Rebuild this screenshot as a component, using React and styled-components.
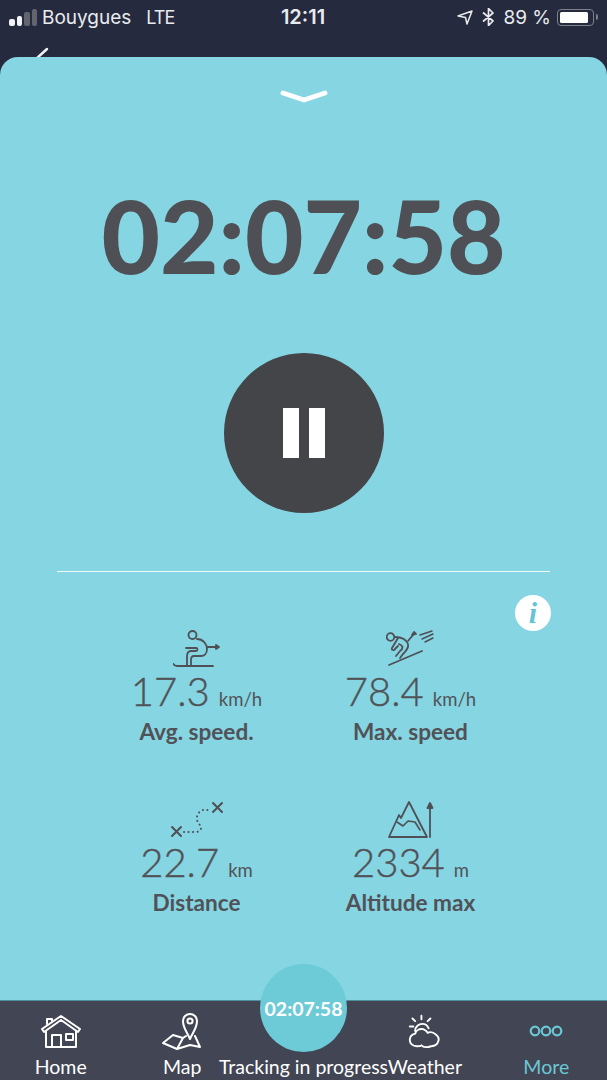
import React from "react";
import styled, { createGlobalStyle } from "styled-components";

const GlobalStyle = createGlobalStyle`
  html, body {
    margin: 0;
    padding: 0;
    background: #252a3e;
  }
  * {
    box-sizing: border-box;
  }
`;

const Screen = styled.div`
  position: relative;
  width: 607px;
  height: 1080px;
  overflow: hidden;
  display: flex;
  flex-direction: column;
  background: #252a3e;
  font-family: Lato, "Open Sans", sans-serif;
`;

const StatusBar = styled.div`
  height: 57px;
  flex: none;
  padding: 0 10px 23px 9px;
  display: grid;
  grid-template-columns: 1fr auto 1fr;
  align-items: center;
  color: #e9eaee;
  font-family: Inter, "Liberation Sans", sans-serif;
  font-size: 19px;
`;

const Carrier = styled.div`
  display: flex;
  align-items: center;
  gap: 5px;
`;

const Signal = styled.div`
  display: flex;
  align-items: flex-end;
  gap: 2px;
  height: 17px;
`;

const SignalBar = styled.span`
  width: 5.5px;
  height: ${(p) => p.$h}px;
  border-radius: 2px;
  background: ${(p) => (p.$on ? "#f2f3f5" : "#62656f")};
`;

const Lte = styled.span`
  margin-left: 10px;
  font-size: 18px;
  letter-spacing: -1px;
`;

const Clock = styled.div`
  font-weight: 600;
  font-size: 20px;
`;

const StatusRight = styled.div`
  display: flex;
  align-items: center;
  justify-content: flex-end;
  gap: 9px;
`;

const Battery = styled.div`
  position: relative;
  width: 37px;
  height: 17px;
  padding: 2px;
  margin-left: -3px;
  margin-right: 3px;
  border: 1.5px solid #7d808b;
  border-radius: 4px;

  &::after {
    content: "";
    position: absolute;
    right: -4.5px;
    top: 4px;
    width: 2px;
    height: 6px;
    border-radius: 0 2px 2px 0;
    background: #7d808b;
  }
`;

const BatteryFill = styled.div`
  height: 100%;
  width: 90%;
  border-radius: 1.5px;
  background: #fff;
`;

const BackChevron = styled.svg`
  position: absolute;
  left: 33px;
  top: 47px;
`;

const Sheet = styled.main`
  position: relative;
  flex: 1;
  min-height: 0;
  padding: 33px 57px 0;
  border-radius: 18px 18px 0 0;
  background: #85d5e2;
  color: #4f5055;
  display: flex;
  flex-direction: column;
  align-items: center;
`;

const Timer = styled.div`
  margin-top: 70px;
  font-size: 101px;
  line-height: 122px;
  font-weight: 900;
  color: #4f5055;
  white-space: nowrap;
`;

const PauseButton = styled.button`
  width: 160px;
  height: 160px;
  margin-top: 57px;
  flex: none;
  padding: 0;
  border: none;
  border-radius: 50%;
  background: #434549;
  display: flex;
  align-items: center;
  justify-content: center;
  gap: 10px;
`;

const PauseBar = styled.span`
  width: 16px;
  height: 50px;
  background: #fff;
`;

const Divider = styled.hr`
  width: 100%;
  height: 1px;
  margin: 58px 0 0;
  border: none;
  background: #f1fafb;
  flex: none;
`;

const InfoBadge = styled.div`
  position: absolute;
  right: 56px;
  top: 538px;
  width: 36px;
  height: 36px;
  border-radius: 50%;
  background: #fff;
  color: #65c5d6;
  display: flex;
  align-items: center;
  justify-content: center;
  font-family: "Liberation Serif", serif;
  font-size: 30px;
  font-weight: 700;
  font-style: italic;
`;

const StatsGrid = styled.div`
  width: 100%;
  margin-top: 57px;
  display: grid;
  grid-template-columns: 214px 214px;
  justify-content: center;
  grid-auto-rows: 171px;
`;

const Stat = styled.div`
  display: flex;
  flex-direction: column;
  align-items: center;
`;

const StatIcon = styled.svg`
  display: block;
  flex: none;
`;

const Value = styled.div`
  margin-top: 2px;
  font-size: 40px;
  line-height: 44px;
  font-weight: 300;
  -webkit-text-stroke: 0.4px #515257;
  color: #515257;
  white-space: nowrap;
`;

const Unit = styled.span`
  margin-left: 9px;
  font-size: 18.5px;
  font-weight: 400;
  -webkit-text-stroke: 0;
`;

const Label = styled.div`
  margin-top: -2px;
  font-size: 22.6px;
  line-height: 26px;
  font-weight: 700;
  color: #515257;
  white-space: nowrap;
`;

const TabBar = styled.nav`
  height: 80px;
  flex: none;
  display: grid;
  grid-template-columns: repeat(5, minmax(0, 1fr));
  border-top: 1px solid #4f8f9b;
  background: #424553;
`;

const Tab = styled.div`
  display: flex;
  flex-direction: column;
  align-items: center;
  justify-content: flex-end;
  color: ${(p) => (p.$active ? "#6bc9d6" : "#fff")};
`;

const TabIcon = styled.div`
  height: 46px;
  display: flex;
  align-items: center;
  justify-content: center;
`;

const TabLabel = styled.span`
  font-size: 19.5px;
  line-height: 26px;
  white-space: nowrap;
`;

const TrackingBubble = styled.div`
  position: absolute;
  left: 260px;
  top: 964px;
  width: 87px;
  height: 88px;
  border-radius: 50%;
  background: #6dcad7;
  color: #fff;
  font-size: 19.5px;
  font-weight: 700;
  line-height: 90px;
  text-align: center;
`;

const SkierIcon = () => (
  <StatIcon width="48" height="38" viewBox="0 0 48 38" fill="none" stroke="#4f5055" strokeWidth="1.8" strokeLinecap="round" strokeLinejoin="round">
    <circle cx="19.5" cy="6" r="4" />
    <path d="M0.5 35C1 36.5 2 37 4 37H40" />
    <path d="M24 10C30 10 34 15 34 20C34 25 31 27 28 27H21C19 27 18 29 18 31V37" />
    <path d="M13 19H23C25 19 25 22 23 22H18C15 22 14 25 14 28V37" />
    <path d="M34 18H44" />
    <path d="M43 16l3 2-3 2z" fill="#4f5055" />
  </StatIcon>
);

const DownhillIcon = () => (
  <StatIcon width="50" height="38" viewBox="0 0 50 38" fill="none" stroke="#4f5055" strokeWidth="1.8" strokeLinecap="round" strokeLinejoin="round">
    <circle cx="4.5" cy="8" r="3.8" />
    <path d="M3 36L36 22" />
    <path d="M9 8C14 8 20 10 22 15C23 19 20 22 17 25L14 29" />
    <path d="M12 9L6 19C5 21 8 22 9 20L12 17" />
    <path d="M13 15C18 17 17 20 14 22L10 27" />
    <path d="M22 12L27 6" />
    <path d="M28 3l2 2-4 1z" fill="#4f5055" />
    <path d="M34 6L46 2M36 10L47 5M39 13L47 9" strokeWidth="1.5" />
  </StatIcon>
);

const RouteIcon = () => (
  <StatIcon width="54" height="38" viewBox="0 0 54 38" fill="none" stroke="#4f5055" strokeLinecap="round">
    <path d="M2 27l9 9M11 27l-9 9M43 3l9 9M52 3l-9 9" strokeWidth="2" />
    <path d="M14 32h12c3 0 5-2 5-4 0-3-3-4-4-8-1-4 2-9 6-10h6" strokeWidth="2" strokeDasharray="0.1 4.4" />
  </StatIcon>
);

const AltitudeIcon = () => (
  <StatIcon width="46" height="38" viewBox="0 0 46 38" fill="none" stroke="#4f5055" strokeWidth="1.8" strokeLinecap="round" strokeLinejoin="round">
    <path d="M1 37L11 15L13 18L21 2L39 37Z" />
    <path d="M9 22L15 26L20 21L27 22L32 30" strokeWidth="1.6" />
    <path d="M42 37V5" />
    <path d="M39.5 8L42 3L44.5 8Z" fill="#4f5055" />
  </StatIcon>
);

const HomeIcon = () => (
  <svg width="40" height="33" viewBox="0 0 40 33" fill="none" stroke="#fff" strokeWidth="2" strokeLinejoin="round" strokeLinecap="round">
    <path d="M1 14L20 1L39 14L37 17L20 5L3 17Z" />
    <path d="M6 9V4H11V6M5 16V32H35V16" />
    <path d="M11 32V20H20V32M25 19H32V25H25Z" />
  </svg>
);

const MapIcon = () => (
  <svg width="40" height="37" viewBox="0 0 40 37" fill="none" stroke="#fff" strokeWidth="2" strokeLinejoin="round" strokeLinecap="round">
    <path d="M28 26C25 19 21 15 21 8A7 7 0 0 1 35 8C35 15 31 19 28 26Z" />
    <circle cx="28" cy="8" r="2.6" />
    <path d="M11 22L1 30L15 36L28 32L38 34L33 23M11 22L21 25L15 36M21 25L24 23" />
  </svg>
);

const WeatherIcon = () => (
  <svg width="34" height="34" viewBox="0 0 36 38" fill="none" stroke="#fff" strokeWidth="2.1" strokeLinecap="round" strokeLinejoin="round">
    <path d="M9 36c-5 0-8-3-8-7 0-3 2-6 6-7 1-4 5-6 9-5 2 1 4 2 5 4 2-1 5-1 8 1 3 2 5 5 4 8-1 4-4 6-8 6-2 1-3 1-5 1-3 0-5-1-6-2-1 1-3 1-5 1z" />
    <path d="M7 19c0-5 4-8 8-8s6 2 7 5M14 2v4M4 5l3 3M24 5l-3 3M1 14h4" />
  </svg>
);

const MoreIcon = () => (
  <svg width="34" height="12" viewBox="0 0 34 12" fill="none" stroke="#6bc9d6" strokeWidth="2.2">
    <circle cx="6" cy="6" r="4.3" />
    <circle cx="17" cy="6" r="4.3" />
    <circle cx="28" cy="6" r="4.3" />
  </svg>
);

const stats = [
  { icon: <SkierIcon />, value: "17.3", unit: "km/h", label: "Avg. speed." },
  { icon: <DownhillIcon />, value: "78.4", unit: "km/h", label: "Max. speed" },
  { icon: <RouteIcon />, value: "22.7", unit: "km", label: "Distance" },
  { icon: <AltitudeIcon />, value: "2334", unit: "m", label: "Altitude max" },
];

const tabs = [
  { icon: <HomeIcon />, label: "Home" },
  { icon: <MapIcon />, label: "Map" },
  { icon: null, label: "Tracking in progress" },
  { icon: <WeatherIcon />, label: "Weather" },
  { icon: <MoreIcon />, label: "More", active: true },
];

export default function App() {
  return (
    <Screen>
      <GlobalStyle />
      <StatusBar>
        <Carrier>
          <Signal>
            <SignalBar $on $h={7} />
            <SignalBar $on $h={10} />
            <SignalBar $h={14} />
            <SignalBar $h={17} />
          </Signal>
          Bouygues
          <Lte>LTE</Lte>
        </Carrier>
        <Clock>12:11</Clock>
        <StatusRight>
          <svg width="16" height="15" viewBox="0 0 16 15" fill="none" stroke="#e9eaee" strokeWidth="1.5" strokeLinejoin="round">
            <path d="M1 6L15 1 10 14 8.5 7.5z" />
          </svg>
          <svg width="12" height="18" viewBox="0 0 12 18" fill="none" stroke="#e9eaee" strokeWidth="1.7" strokeLinejoin="round">
            <path d="M1 4.5L11 13l-4.5 4.5V.5L11 5 1 13.5" />
          </svg>
          <span>89 %</span>
          <Battery>
            <BatteryFill />
          </Battery>
        </StatusRight>
      </StatusBar>
      <BackChevron width="16" height="12" viewBox="0 0 16 12" fill="none" stroke="#f2f3f5" strokeWidth="2.4" strokeLinecap="round">
        <path d="M14 2L3 12" />
      </BackChevron>

      <Sheet>
        <svg width="48" height="14" viewBox="0 0 48 14" fill="none" stroke="#fff" strokeWidth="5" strokeLinecap="round" strokeLinejoin="round">
          <path d="M3 3l21 7 21-7" />
        </svg>
        <Timer>02:07:58</Timer>
        <PauseButton aria-label="Pause">
          <PauseBar />
          <PauseBar />
        </PauseButton>
        <Divider />
        <InfoBadge>i</InfoBadge>
        <StatsGrid>
          {stats.map((s) => (
            <Stat key={s.label}>
              {s.icon}
              <Value>
                {s.value}
                <Unit>{s.unit}</Unit>
              </Value>
              <Label>{s.label}</Label>
            </Stat>
          ))}
        </StatsGrid>
      </Sheet>

      <TabBar>
        {tabs.map((t) => (
          <Tab key={t.label} $active={t.active}>
            <TabIcon>{t.icon}</TabIcon>
            <TabLabel>{t.label}</TabLabel>
          </Tab>
        ))}
      </TabBar>
      <TrackingBubble>02:07:58</TrackingBubble>
    </Screen>
  );
}
